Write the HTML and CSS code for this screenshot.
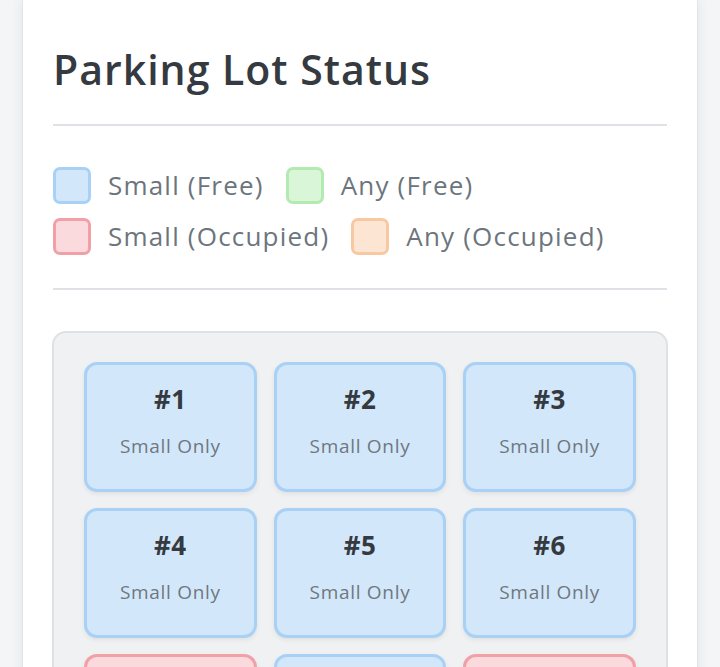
FILE: index.html
```html
<!DOCTYPE html>
<html lang="en">
<head>
<meta charset="utf-8">
<title>Parking Lot Status</title>
<link rel="stylesheet" href="styles.css">
</head>
<body>
<main class="card">
  <h1 class="title">Parking Lot Status</h1>
  <hr class="divider">
  <div class="legend">
    <div class="legend-item"><span class="swatch small-free"></span><span class="legend-label">Small (Free)</span></div>
    <div class="legend-item"><span class="swatch any-free"></span><span class="legend-label">Any (Free)</span></div>
    <div class="legend-item"><span class="swatch small-occ"></span><span class="legend-label">Small (Occupied)</span></div>
    <div class="legend-item"><span class="swatch any-occ"></span><span class="legend-label">Any (Occupied)</span></div>
  </div>
  <hr class="divider">
  <section class="lot">
    <div class="spot small-free"><div class="spot-num">#1</div><div class="spot-type">Small Only</div></div>
    <div class="spot small-free"><div class="spot-num">#2</div><div class="spot-type">Small Only</div></div>
    <div class="spot small-free"><div class="spot-num">#3</div><div class="spot-type">Small Only</div></div>
    <div class="spot small-free"><div class="spot-num">#4</div><div class="spot-type">Small Only</div></div>
    <div class="spot small-free"><div class="spot-num">#5</div><div class="spot-type">Small Only</div></div>
    <div class="spot small-free"><div class="spot-num">#6</div><div class="spot-type">Small Only</div></div>
    <div class="spot small-occ"><div class="spot-num">#7</div><div class="spot-type">Small Only</div></div>
    <div class="spot small-free"><div class="spot-num">#8</div><div class="spot-type">Small Only</div></div>
    <div class="spot small-occ"><div class="spot-num">#9</div><div class="spot-type">Small Only</div></div>
  </section>
</main>
</body>
</html>
```
FILE: styles.css
```css
html, body {
  margin: 0;
  padding: 0;
}
body {
  background: #f4f5f7;
  font-family: "Open Sans", "DejaVu Sans", sans-serif;
  padding: 0 22px;
  height: 667px;
  overflow: hidden;
}
.card {
  background: #ffffff;
  border: 1px solid #e2e4e8;
  border-top: none;
  box-shadow: 0 0 12px rgba(30, 40, 60, 0.08);
  padding: 44px 30px 40px;
  min-height: 700px;
}
.title {
  margin: 0;
  font-size: 41px;
  line-height: 50px;
  font-weight: 600;
  color: #343a40;
  letter-spacing: 1px;
}
.divider {
  border: none;
  height: 2px;
  background: #dee2e6;
  margin: 30px 0 0;
}
.legend {
  display: flex;
  flex-wrap: wrap;
  column-gap: 22px;
  row-gap: 14px;
  margin: 41px 0 33px;
}
.legend-item {
  display: flex;
  align-items: center;
  gap: 17px;
}
.swatch {
  width: 32px;
  height: 31px;
  border-width: 3px;
  border-style: solid;
  border-radius: 7px;
  flex: none;
}
.legend-label {
  font-size: 26px;
  letter-spacing: 1.2px;
  color: #6c757d;
  line-height: 37px;
}
.lot {
  margin: 41px -1px 0;
  background: #f0f1f3;
  border: 2px solid #dfe1e4;
  border-radius: 14px;
  padding: 29px 30px;
  display: grid;
  grid-template-columns: repeat(3, 1fr);
  column-gap: 17px;
  row-gap: 16px;
}
.spot {
  height: 130px;
  box-sizing: border-box;
  border-width: 3px;
  border-style: solid;
  border-radius: 13px;
  box-shadow: 0 2px 5px rgba(0, 0, 0, 0.07);
  display: flex;
  flex-direction: column;
  align-items: center;
  padding-top: 17px;
}
.spot-num {
  font-size: 26px;
  font-weight: 700;
  color: #343a40;
  line-height: 34px;
  letter-spacing: 0.5px;
}
.spot-type {
  font-size: 19px;
  letter-spacing: 0.7px;
  color: #6f777f;
  margin-top: 18px;
  line-height: 24px;
}
.small-free { background: #d3e7fb; border-color: #a8d1f5; }
.any-free { background: #daf6d9; border-color: #b2eab1; }
.small-occ { background: #fadadd; border-color: #f0a0a6; }
.any-occ { background: #fde5d3; border-color: #f8c9a1; }
```
